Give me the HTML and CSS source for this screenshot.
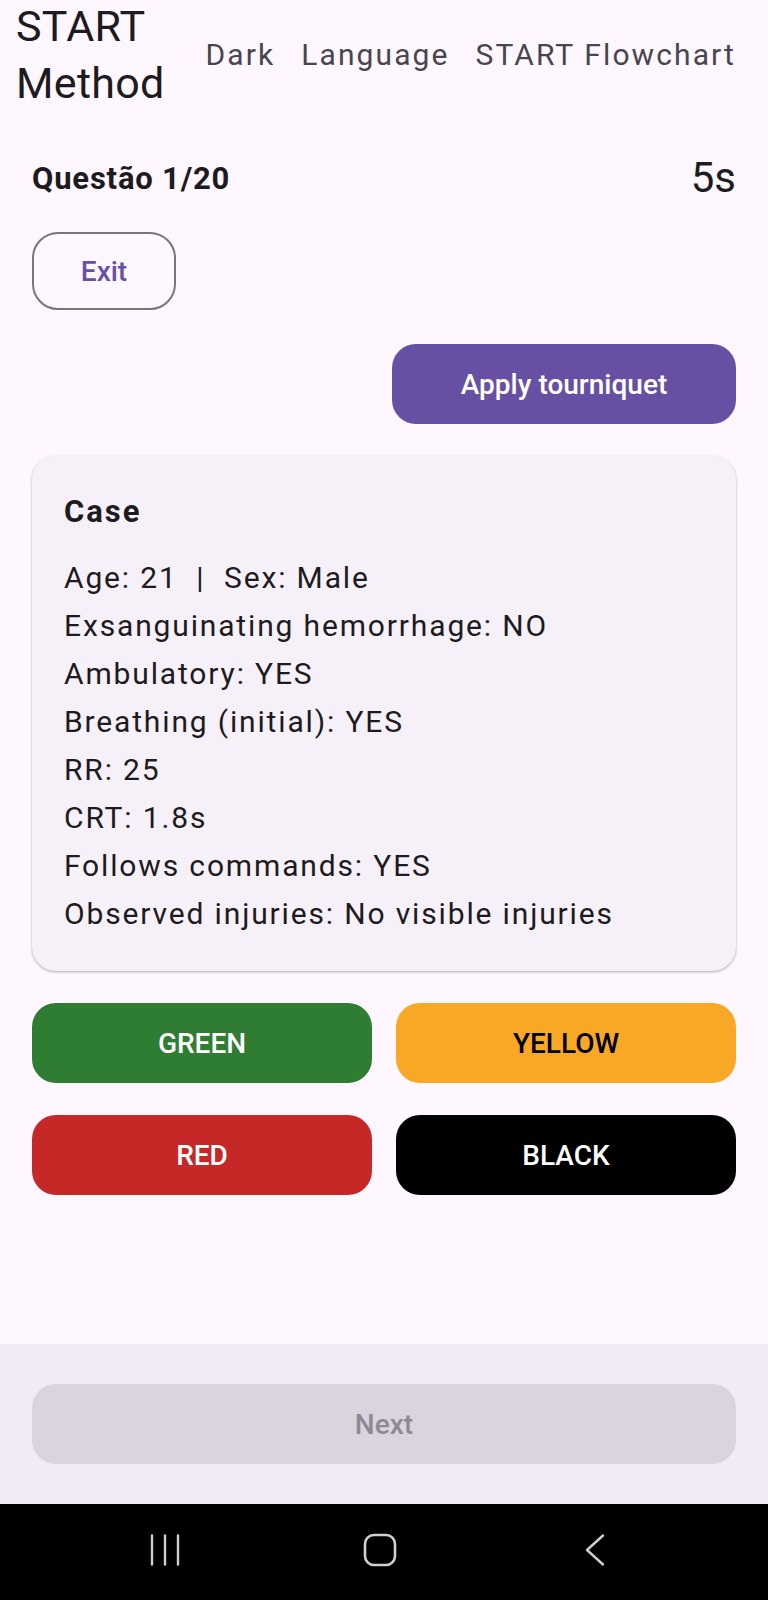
FILE: index.html
```html
<!DOCTYPE html>
<html lang="pt">
<head>
<meta charset="utf-8">
<title>START Method</title>
<link rel="stylesheet" href="styles.css">
</head>
<body>
<div class="app">
  <header class="topbar">
    <h1 class="title">START<br>Method</h1>
    <nav class="actions">
      <span class="action">Dark</span>
      <span class="action">Language</span>
      <span class="action">START Flowchart</span>
    </nav>
  </header>

  <main class="content">
    <div class="status-row">
      <span class="question">Questão 1/20</span>
      <span class="timer">5s</span>
    </div>

    <div class="exit-row">
      <button class="btn btn-outline">Exit</button>
    </div>

    <div class="apply-row">
      <button class="btn btn-primary">Apply tourniquet</button>
    </div>

    <section class="card">
      <h2 class="card-title">Case</h2>
      <div class="card-lines">
        <p>Age: 21&nbsp; |&nbsp; Sex: Male</p>
        <p>Exsanguinating hemorrhage: NO</p>
        <p>Ambulatory: YES</p>
        <p>Breathing (initial): YES</p>
        <p>RR: 25</p>
        <p>CRT: 1.8s</p>
        <p>Follows commands: YES</p>
        <p>Observed injuries: No visible injuries</p>
      </div>
    </section>

    <div class="triage-grid">
      <button class="btn btn-tri green">GREEN</button>
      <button class="btn btn-tri yellow">YELLOW</button>
      <button class="btn btn-tri red">RED</button>
      <button class="btn btn-tri black">BLACK</button>
    </div>
  </main>

  <footer class="bottombar">
    <button class="btn btn-disabled">Next</button>
  </footer>

  <div class="sysnav">
    <span class="navicon">
      <svg width="40" height="34" viewBox="0 0 40 34">
        <path d="M7 2.5v29M20 2.5v29M33 2.5v29" stroke="#cfcfcf" stroke-width="2.4" stroke-linecap="round" fill="none"/>
      </svg>
    </span>
    <span class="navicon">
      <svg width="40" height="34" viewBox="0 0 40 34">
        <rect x="5" y="2" width="30" height="30" rx="9" ry="9" stroke="#cfcfcf" stroke-width="2.6" fill="none"/>
      </svg>
    </span>
    <span class="navicon">
      <svg width="40" height="34" viewBox="0 0 40 34">
        <path d="M28 2.5L12 17L28 31.5" stroke="#cfcfcf" stroke-width="2.4" stroke-linecap="round" stroke-linejoin="round" fill="none"/>
      </svg>
    </span>
  </div>
</div>
</body>
</html>
```

FILE: styles.css
```css
* {
  box-sizing: border-box;
}

html, body {
  margin: 0;
  padding: 0;
}

body {
  background: #fef7ff;
  font-family: Roboto, "Noto Sans", "Liberation Sans", sans-serif;
  color: #1d1b20;
}

.app {
  width: 768px;
  height: 1600px;
  display: flex;
  flex-direction: column;
  overflow: hidden;
}

/* Top app bar */
.topbar {
  height: 110px;
  display: flex;
  align-items: center;
  padding: 0 32px 0 16px;
}

.title {
  margin: 0;
  font-size: 43px;
  line-height: 57px;
  font-weight: 400;
  letter-spacing: 0.3px;
  color: #1d1b20;
}

.actions {
  margin-left: auto;
  display: flex;
  gap: 26px;
}

.action {
  font-size: 30px;
  line-height: 40px;
  letter-spacing: 2.1px;
  color: #49454f;
  white-space: nowrap;
}

/* Main content */
.content {
  flex: 1;
  padding: 0 32px;
  display: flex;
  flex-direction: column;
}

.status-row {
  margin-top: 40px;
  height: 56px;
  display: flex;
  align-items: center;
  justify-content: space-between;
}

.question {
  font-size: 31px;
  font-weight: 700;
  line-height: 56px;
  letter-spacing: 0.8px;
  padding-top: 2px;
}

.timer {
  font-size: 42px;
  line-height: 56px;
  color: #1d1b20;
}

.btn {
  border: none;
  font-family: Roboto, "Noto Sans", "Liberation Sans", sans-serif;
  font-size: 28px;
  font-weight: 500;
  border-radius: 24px;
  height: 80px;
  padding: 0;
  cursor: pointer;
}

.exit-row {
  margin-top: 26px;
  display: flex;
}

.btn-outline {
  width: 144px;
  height: 78px;
  background: transparent;
  border: 2px solid #79747e;
  color: #6750a4;
  border-radius: 26px;
}

.apply-row {
  margin-top: 34px;
  display: flex;
  justify-content: flex-end;
}

.btn-primary {
  width: 344px;
  background: #6750a4;
  color: #ffffff;
}

/* Case card */
.card {
  margin-top: 32px;
  background: #f6f1f8;
  border-radius: 24px;
  padding: 32px 32px 33px;
  box-shadow: 0 1px 2px rgba(0, 0, 0, 0.22), 0 1px 3px 1px rgba(0, 0, 0, 0.08);
}

.card-title {
  margin: 0;
  font-size: 31px;
  font-weight: 700;
  line-height: 48px;
  letter-spacing: 2px;
}

.card-lines {
  margin-top: 18px;
}

.card-lines p {
  margin: 0;
  font-size: 30px;
  line-height: 48px;
  letter-spacing: 1.85px;
}

/* Triage buttons */
.triage-grid {
  margin-top: 32px;
  display: grid;
  grid-template-columns: 1fr 1fr;
  column-gap: 24px;
  row-gap: 32px;
}

.btn-tri {
  width: 100%;
}

.green {
  background: #2e7d32;
  color: #ffffff;
}

.yellow {
  background: #f9a825;
  color: #000000;
}

.red {
  background: #c62828;
  color: #ffffff;
}

.black {
  background: #000000;
  color: #ffffff;
}

/* Bottom bar */
.bottombar {
  height: 160px;
  background: #f1ebf6;
  padding: 40px 32px;
}

.btn-disabled {
  width: 100%;
  background: #dad4de;
  color: #8e8993;
}

/* System navigation bar */
.sysnav {
  height: 96px;
  background: #000000;
  display: flex;
  align-items: center;
  padding: 0 0 4px 145px;
  gap: 175px;
}

.navicon {
  display: flex;
  width: 40px;
  height: 34px;
}
```
